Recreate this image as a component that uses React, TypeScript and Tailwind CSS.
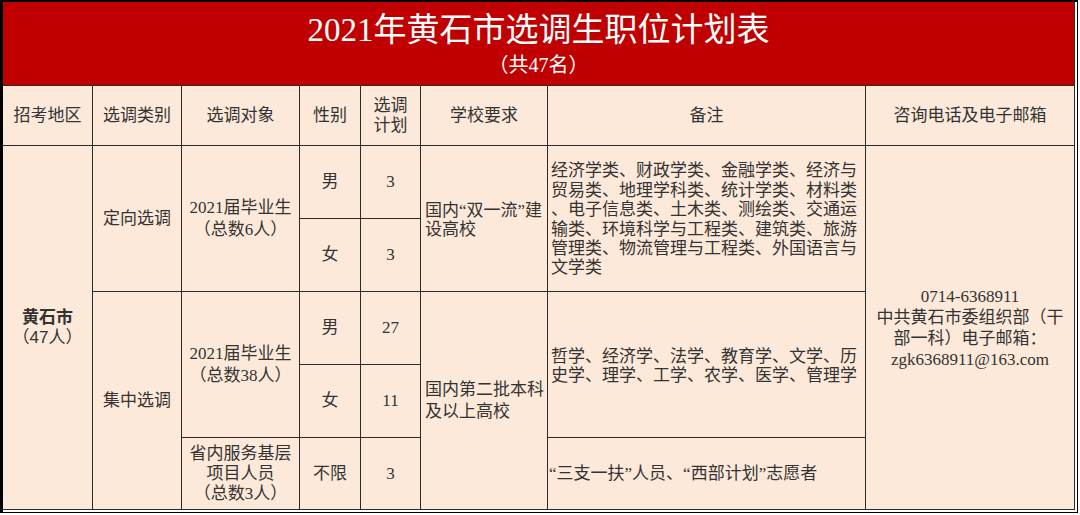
const serif = "font-['Liberation_Serif','Noto_Sans_CJK_SC',serif]"
const sans = "font-['Liberation_Sans','Noto_Sans_CJK_SC',sans-serif]"
const cell = 'bg-[#fde9d9] flex items-center justify-center text-center text-[#333] text-[17px]'

function Lines({ lines, leading }: { lines: string[]; leading: string }) {
  return (
    <div className={leading}>
      {lines.map(l => (
        <div key={l} className="whitespace-nowrap">{l}</div>
      ))}
    </div>
  )
}

export default function App() {
  return (
    <div className="w-[1080px] h-[515px] bg-white">
      <div className="w-[1078px] h-[513px] border-t-2 border-l-[3px] border-r border-b border-black pr-[2px] pb-[2px] bg-white">
        <div className="h-full flex flex-col border-r border-[#2a2a2a]">
          <div className={`h-[83px] bg-[#c00000] flex flex-col items-center pt-[8px] text-white ${serif}`}>
            <div className="text-[33px] leading-[40px]">2021年黄石市选调生职位计划表</div>
            <div className="text-[20px] leading-[24px] mt-[3px]">（共47名）</div>
          </div>
          <div className="grid grid-cols-[89px_88px_117px_60px_59px_126px_317px_208px] grid-rows-[59px_72px_72px_72px_72px_71px] gap-px bg-[#2a2a2a] border-t border-b border-[#2a2a2a]">
            {/* header */}
            {['招考地区', '选调类别', '选调对象', '性别'].map((h, i) => (
              <div key={h} className={`${cell} ${sans} row-start-1 ${['col-start-1', 'col-start-2', 'col-start-3', 'col-start-4'][i]}`}>
                {h}
              </div>
            ))}
            <div className={`${cell} ${sans} row-start-1 col-start-5`}>
              <Lines lines={['选调', '计划']} leading="leading-[20px]" />
            </div>
            {['学校要求', '备注', '咨询电话及电子邮箱'].map((h, i) => (
              <div key={h} className={`${cell} ${sans} row-start-1 ${['col-start-6', 'col-start-7', 'col-start-8'][i]}`}>
                {h}
              </div>
            ))}

            {/* region */}
            <div className={`${cell} ${sans} col-start-1 row-start-2 row-span-5 pt-px`}>
              <div className="leading-[20px]">
                <div className="font-bold">黄石市</div>
                <div>（47人）</div>
              </div>
            </div>

            {/* category */}
            <div className={`${cell} ${serif} col-start-2 row-start-2 row-span-2`}>定向选调</div>
            <div className={`${cell} ${serif} col-start-2 row-start-4 row-span-3`}>集中选调</div>

            {/* target */}
            <div className={`${cell} ${serif} col-start-3 row-start-2 row-span-2`}>
              <Lines lines={['2021届毕业生', '（总数6人）']} leading="leading-[22px]" />
            </div>
            <div className={`${cell} ${serif} col-start-3 row-start-4 row-span-2`}>
              <Lines lines={['2021届毕业生', '（总数38人）']} leading="leading-[22px]" />
            </div>
            <div className={`${cell} ${serif} col-start-3 row-start-6`}>
              <Lines lines={['省内服务基层', '项目人员', '（总数3人）']} leading="leading-[20px]" />
            </div>

            {/* gender + quota */}
            {[
              ['男', '3', 'row-start-2'],
              ['女', '3', 'row-start-3'],
              ['男', '27', 'row-start-4'],
              ['女', '11', 'row-start-5'],
              ['不限', '3', 'row-start-6'],
            ].map(([g, n, r]) => (
              <div key={r} className="contents">
                <div className={`${cell} ${serif} col-start-4 ${r}`}>{g}</div>
                <div className={`${cell} ${serif} col-start-5 ${r}`}>{n}</div>
              </div>
            ))}

            {/* school */}
            <div className={`${cell} ${serif} col-start-6 row-start-2 row-span-2 !justify-start !text-left pl-[4px] pt-[2px]`}>
              <Lines lines={['国内“双一流”建', '设高校']} leading="leading-[19px]" />
            </div>
            <div className={`${cell} ${serif} col-start-6 row-start-4 row-span-3 !justify-start !text-left pl-[4px]`}>
              <Lines lines={['国内第二批本科', '及以上高校']} leading="leading-[22px]" />
            </div>

            {/* notes */}
            <div className={`${cell} ${serif} col-start-7 row-start-2 row-span-2 !justify-start !text-left pl-[3px] pt-[2px]`}>
              <Lines
                lines={[
                  '经济学类、财政学类、金融学类、经济与',
                  '贸易类、地理学科类、统计学类、材料类',
                  '、电子信息类、土木类、测绘类、交通运',
                  '输类、环境科学与工程类、建筑类、旅游',
                  '管理类、物流管理与工程类、外国语言与',
                  '文学类',
                ]}
                leading="leading-[19.4px]"
              />
            </div>
            <div className={`${cell} ${serif} col-start-7 row-start-4 row-span-2 !justify-start !text-left pl-[3px] pt-[2px]`}>
              <Lines
                lines={['哲学、经济学、法学、教育学、文学、历', '史学、理学、工学、农学、医学、管理学']}
                leading="leading-[19px]"
              />
            </div>
            <div className={`${cell} ${serif} col-start-7 row-start-6 !justify-start !text-left pl-[1px]`}>
              “三支一扶”人员、“西部计划”志愿者
            </div>

            {/* contact */}
            <div className={`${cell} ${serif} col-start-8 row-start-2 row-span-5`}>
              <Lines
                lines={['0714-6368911', '中共黄石市委组织部（干', '部一科）电子邮箱：', 'zgk6368911@163.com']}
                leading="leading-[21px]"
              />
            </div>
          </div>
        </div>
      </div>
    </div>
  )
}
